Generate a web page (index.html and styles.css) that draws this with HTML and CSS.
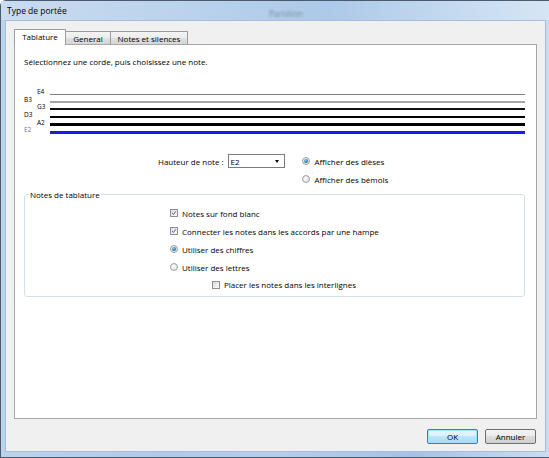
FILE: index.html
```html
<!DOCTYPE html>
<html>
<head>
<meta charset="utf-8">
<title>Type de portée</title>
<link rel="stylesheet" href="styles.css">
</head>
<body>
<div class="window">
  <div class="titlebar">
    <span class="title">Type de portée</span>
    <span class="ghost">Partition</span>
  </div>
  <div class="client">
    <div class="tabs">
      <div class="tab active t1">Tablature</div>
      <div class="tab t2">General</div>
      <div class="tab t3">Notes et silences</div>
    </div>
    <div class="panel">
      <p class="intro">Sélectionnez une corde, puis choisissez une note.</p>
      <div class="strings">
        <div class="string"><span class="lbl in">E4</span><span class="line l1"></span></div>
        <div class="string"><span class="lbl">B3</span><span class="line l2"></span></div>
        <div class="string"><span class="lbl in">G3</span><span class="line l3"></span></div>
        <div class="string"><span class="lbl">D3</span><span class="line l4"></span></div>
        <div class="string"><span class="lbl in">A2</span><span class="line l5"></span></div>
        <div class="string"><span class="lbl sel">E2</span><span class="line l6"></span></div>
      </div>
      <div class="pitch">
        <div class="pitch-left">
          <span class="pitch-label">Hauteur de note :</span>
          <div class="select"><span class="select-val">E2</span><span class="arrow"></span></div>
        </div>
        <div class="radios">
          <div class="opt"><span class="radio on"></span><span>Afficher des dièses</span></div>
          <div class="opt"><span class="radio"></span><span>Afficher des bémols</span></div>
        </div>
      </div>
      <fieldset class="group">
        <legend>Notes de tablature</legend>
        <div class="group-body">
          <div class="opt"><span class="check on"><svg viewBox="0 0 8 8"><path d="M1.6 4.2 L3.2 5.9 L6.4 1.8" fill="none" stroke="#3c5a9a" stroke-width="1.3"/></svg></span><span>Notes sur fond blanc</span></div>
          <div class="opt"><span class="check on"><svg viewBox="0 0 8 8"><path d="M1.6 4.2 L3.2 5.9 L6.4 1.8" fill="none" stroke="#3c5a9a" stroke-width="1.3"/></svg></span><span>Connecter les notes dans les accords par une hampe</span></div>
          <div class="opt"><span class="radio on"></span><span>Utiliser des chiffres</span></div>
          <div class="opt"><span class="radio"></span><span>Utiliser des lettres</span></div>
          <div class="opt sub"><span class="check"></span><span>Placer les notes dans les interlignes</span></div>
        </div>
      </fieldset>
    </div>
    <div class="buttons">
      <button class="btn default">OK</button>
      <button class="btn">Annuler</button>
    </div>
  </div>
</div>
</body>
</html>
```
FILE: styles.css
```css
html, body {
  margin: 0;
  padding: 0;
}
body {
  width: 549px;
  height: 458px;
  overflow: hidden;
  font-family: "Open Sans", "Noto Sans", sans-serif;
  font-size: 8px;
  color: #000;
  background: #fff;
}
.window {
  box-sizing: border-box;
  width: 549px;
  height: 458px;
  display: flex;
  flex-direction: column;
  border: 1px solid #4b5a6e;
  border-right: none;
  border-top-left-radius: 6px;
  background: linear-gradient(90deg, #bcd3ec 0%, #aecbea 30%, #b4cfec 50%, #a4c3e6 75%, #c9ddf2 100%);
}
.titlebar {
  height: 19px;
  display: flex;
  align-items: center;
  padding-left: 6px;
  background: linear-gradient(90deg, #c9dcf0 0%, #bad2ec 35%, #adc9e9 60%, #c2d8ef 80%, #d6e5f5 100%);
}
.title {
  width: 262px;
  font-size: 8.5px;
  color: #000;
}
.ghost {
  font-size: 8.5px;
  color: rgba(40, 60, 80, 0.45);
  filter: blur(0.8px);
  margin-top: 5px;
}
.client {
  flex: 1;
  margin: 0 3px 5px 4px;
  background: #f0f0f0;
  border: 1px solid #a8bdd5;
  display: flex;
  flex-direction: column;
  padding: 8px 8px 7px 8px;
  min-height: 0;
}
.tabs {
  display: flex;
  align-items: flex-end;
  height: 15px;
  position: relative;
  z-index: 1;
}
.tab {
  box-sizing: border-box;
  height: 13px;
  border: 1px solid #9a9ca3;
  border-bottom: none;
  background: linear-gradient(#f4f4f4, #ececec 50%, #e0e0e0 50%, #d6d6d6);
  display: flex;
  align-items: center;
  justify-content: center;
  font-size: 8px;
  margin-left: -1px;
}
.tab.active {
  height: 16px;
  margin-bottom: -1px;
  margin-left: 0;
  background: #fff;
  position: relative;
  z-index: 2;
  padding-bottom: 2px;
}
.t1 { width: 52px; }
.t2 { width: 46px; }
.t3 { width: 78px; }
.panel {
  flex: 1;
  background: #fff;
  border: 1px solid #a7a7a7;
  padding: 11px 11px 0 9px;
  display: flex;
  flex-direction: column;
  min-height: 0;
}
.intro {
  margin: 0;
  line-height: 12px;
}
.strings {
  margin-top: 22.5px;
  display: flex;
  flex-direction: column;
}
.string {
  height: 7.6px;
  display: flex;
  align-items: center;
}
.lbl {
  box-sizing: border-box;
  width: 26px;
  font-size: 6.5px;
  line-height: 7px;
  margin-bottom: 5px;
}
.lbl.in { padding-left: 13px; }
.lbl.sel { color: #6a6ae8; }
.line { flex: 1; }
.l1 { height: 1px; background: #7d7d7d; }
.l2 { height: 2px; background: #a6a6a6; }
.l3 { height: 2px; background: #111; }
.l4 { height: 2px; background: #000; }
.l5 { height: 3px; background: #000; }
.l6 { height: 3px; background: #1c1ce0; }
.pitch {
  margin-top: 16px;
  display: flex;
  padding-left: 134px;
  gap: 17px;
}
.pitch-left {
  height: 18px;
  display: flex;
  align-items: center;
  gap: 4px;
}
.select {
  box-sizing: border-box;
  width: 57px;
  height: 14px;
  border: 1px solid #7b7b7b;
  background: #fff;
  display: flex;
  align-items: center;
  justify-content: space-between;
  padding: 0 5px 0 2px;
}
.arrow {
  width: 0;
  height: 0;
  border-left: 2.5px solid transparent;
  border-right: 2.5px solid transparent;
  border-top: 3px solid #000;
}
.radios {
  display: flex;
  flex-direction: column;
}
.opt {
  height: 18px;
  display: flex;
  align-items: center;
  gap: 5px;
}
.radio {
  box-sizing: border-box;
  width: 8px;
  height: 8px;
  border-radius: 50%;
  border: 1px solid #a0a0a0;
  background: radial-gradient(circle at 40% 40%, #ffffff, #d6d6d6);
  display: flex;
  align-items: center;
  justify-content: center;
}
.radio.on::after {
  content: "";
  width: 4px;
  height: 4px;
  border-radius: 50%;
  background: radial-gradient(circle at 40% 35%, #7fd0f5, #1f5f8c 75%);
}
.check {
  box-sizing: border-box;
  width: 8px;
  height: 8px;
  border: 1px solid #8f8f8f;
  background: linear-gradient(135deg, #dcdcdc, #fafafa);
  display: flex;
}
.check svg {
  width: 6px;
  height: 6px;
}
.group {
  margin: 1px 0 0 0;
  border: 1px solid #d5dfe5;
  border-radius: 3px;
  padding: 0 0 3px 0;
}
.group legend {
  margin-left: 4px;
  padding: 0 1px;
  line-height: 11px;
}
.group-body {
  padding: 4px 0 0 145px;
  display: flex;
  flex-direction: column;
}
.group-body .opt { gap: 4px; }
.group-body .opt.sub {
  height: 17px;
  padding-left: 42px;
}
.buttons {
  margin-top: 10px;
  display: flex;
  justify-content: flex-end;
  gap: 7px;
  padding-right: 1px;
}
.btn {
  box-sizing: border-box;
  width: 51px;
  height: 15px;
  font-family: inherit;
  font-size: 8px;
  padding: 0;
  border-radius: 2px;
  border: 1px solid #707070;
  background: linear-gradient(#f3f3f3, #ebebeb 50%, #dddddd 50%, #cfcfcf);
  color: #000;
}
.btn.default {
  border-color: #3c7fb1;
  background: linear-gradient(#eaf6fd, #d9f0fc 50%, #bee6fd 50%, #a7d9f5);
  box-shadow: inset 0 0 0 1px #a6e0fb;
}
```
